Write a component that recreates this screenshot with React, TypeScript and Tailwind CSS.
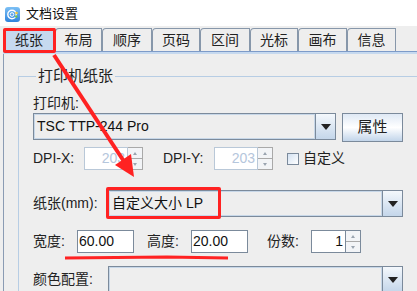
import React from 'react'

const tabs = [
  { name: '纸张', w: 'w-[52px]', active: true },
  { name: '布局', w: 'w-[47px]' },
  { name: '顺序', w: 'w-[50px]' },
  { name: '页码', w: 'w-[48px]' },
  { name: '区间', w: 'w-[50px]' },
  { name: '光标', w: 'w-[48px]' },
  { name: '画布', w: 'w-[49px]' },
  { name: '信息', w: 'w-[49px]' },
]

const DropButton = () => (
  <div className="w-[20px] h-full shrink-0 border-l border-[#7b8a9b] bg-gradient-to-b from-[#f4f8fc] to-[#c4d6ea] flex items-center justify-center">
    <div className="w-0 h-0 border-l-[5px] border-r-[5px] border-t-[6px] border-l-transparent border-r-transparent border-t-[#222]" />
  </div>
)

const Combo = ({ w, text }: { w: string; text?: string }) => (
  <div className={`${w} h-[27px] flex border border-[#7b8a9b] bg-[#eeeeee]`}>
    <div className="flex-1 border border-[#c7d7e8] flex items-center pl-[2px] text-[14px] text-[#111] whitespace-nowrap">
      {text}
    </div>
    <DropButton />
  </div>
)

const Spinner = ({
  value,
  fieldW,
  disabled,
}: {
  value: string
  fieldW: string
  disabled?: boolean
}) => (
  <div className="flex h-[23px]">
    <div
      className={`${fieldW} h-full bg-white border flex items-center justify-end pr-[2px] text-[14px] ${
        disabled ? 'border-[#b9c8d8] text-[#b5c6dc]' : 'border-[#7b8a9b] text-[#111]'
      }`}
    >
      {value}
    </div>
    <div
      className={`w-[15px] h-full flex flex-col border border-l-0 ${
        disabled ? 'border-[#a9a9a9]' : 'border-[#7b8a9b]'
      }`}
    >
      <div className="flex-1 border-b border-[#a9a9a9] bg-[#f2f4f7] flex items-center justify-center">
        <div className="w-0 h-0 border-l-[2px] border-r-[2px] border-b-[3px] border-l-transparent border-r-transparent border-b-[#9aa4b0]" />
      </div>
      <div className="flex-1 bg-[#f2f4f7] flex items-center justify-center">
        <div className="w-0 h-0 border-l-[2px] border-r-[2px] border-t-[3px] border-l-transparent border-r-transparent border-t-[#9aa4b0]" />
      </div>
    </div>
  </div>
)

const TextField = ({ value }: { value: string }) => (
  <div className="w-[57px] h-[23px] bg-white border border-[#7b8a9b] flex items-center pl-[1px] text-[14px] text-[#111]">
    {value}
  </div>
)

const AppIcon = () => (
  <svg width="15" height="15" viewBox="0 0 15 15">
    <defs>
      <linearGradient id="ic" x1="0" y1="0" x2="0" y2="1">
        <stop offset="0" stopColor="#7cc0f5" />
        <stop offset="1" stopColor="#2f83dc" />
      </linearGradient>
    </defs>
    <rect x="0" y="0" width="15" height="15" rx="3" fill="url(#ic)" />
    <circle cx="7" cy="7.5" r="4.2" fill="none" stroke="#fff" strokeWidth="1.4" />
    <circle cx="7" cy="7.5" r="1.8" fill="none" stroke="#fff" strokeWidth="1" />
    <circle cx="11.5" cy="6" r="1.3" fill="#f3c53a" />
    <circle cx="11.2" cy="9.5" r="1.2" fill="#6cc24a" />
  </svg>
)

export default function App() {
  return (
    <div className="relative w-[417px] h-[291px] overflow-hidden bg-[#eeeeee] text-[#222] font-['Liberation_Sans','Noto_Sans_CJK_SC',sans-serif]">
      {/* title bar */}
      <div className="h-[26px] bg-white flex items-center pl-[5px] gap-[6px]">
        <div className="mt-[3px]">
          <AppIcon />
        </div>
        <span className="text-[13px] text-[#111] mt-[1px]">文档设置</span>
      </div>

      {/* tabs */}
      <div className="flex pl-[3px] pt-[2px] h-[25px]">
        {tabs.map((t) => (
          <div
            key={t.name}
            className={`${t.w} h-[23px] border border-b-0 border-[#8797aa] rounded-tl-[4px] flex items-center justify-center text-[14px] text-[#222] ${
              t.active ? 'bg-[#c6d9ef]' : 'bg-[#eeeeee]'
            }`}
          >
            {t.name}
          </div>
        ))}
      </div>
      <div className="h-[1px] bg-[#7d9bc9] ml-[3px]" />
      <div className="h-[2px] bg-[#c6d9ef] ml-[3px]" />

      {/* panel */}
      <div className="ml-[3px] border-l border-[#8a9bb3] h-[240px] pt-[13px]">
        <fieldset className="ml-[14px] w-[410px] border border-[#b7cde4] pl-[14px] pb-[20px]">
          <legend className="ml-[3px] px-[2px] text-[15px] leading-[18px] text-[#222]">打印机纸张</legend>

          <div className="mt-[9px] h-[18px] text-[14px] leading-[18px]">打印机:</div>

          <div className="mt-[1px] flex items-start">
            <Combo w="w-[303px]" text="TSC TTP-244 Pro" />
            <div className="ml-[6px] w-[61px] h-[29px] border border-[#7b8a9b] bg-gradient-to-b from-[#dfe9f5] via-white to-[#c2d5ea] flex items-center justify-center text-[15px] text-[#222]">
              属性
            </div>
          </div>

          <div className="mt-[5px] h-[23px] flex items-center text-[14px]">
            <span className="w-[51px]">DPI-X:</span>
            <Spinner value="203" fieldW="w-[44px]" disabled />
            <span className="ml-[20px] w-[51px]">DPI-Y:</span>
            <Spinner value="203" fieldW="w-[44px]" disabled />
            <div className="ml-[14px] w-[12px] h-[12px] border border-[#7b8a9b] bg-gradient-to-br from-[#d4e2f2] to-white" />
            <span className="ml-[4px]">自定义</span>
          </div>

          <div className="mt-[20px] h-[27px] flex items-center text-[14px]">
            <span className="w-[75px]">纸张(mm):</span>
            <Combo w="w-[295px]" text="自定义大小 LP" />
          </div>

          <div className="mt-[13px] h-[23px] flex items-center text-[14px]">
            <span className="w-[44px]">宽度:</span>
            <TextField value="60.00" />
            <span className="ml-[13px] w-[44px]">高度:</span>
            <TextField value="20.00" />
            <span className="ml-[19px] w-[44px]">份数:</span>
            <Spinner value="1" fieldW="w-[35px]" />
          </div>

          <div className="mt-[13px] h-[27px] flex items-center text-[14px]">
            <span className="w-[75px]">颜色配置:</span>
            <Combo w="w-[295px]" />
          </div>
        </fieldset>
      </div>

      {/* red annotations */}
      <div className="absolute left-[3px] top-[28px] w-[53px] h-[25px] border-[3px] border-[#f22] rounded-[2px]" />
      <div className="absolute left-[106px] top-[187px] w-[115px] h-[32px] border-[3px] border-[#f22] rounded-[2px]" />
      <svg className="absolute inset-0 pointer-events-none" width="417" height="291">
        <line x1="54" y1="55" x2="125" y2="163" stroke="#f22" strokeWidth="4" />
        <polygon points="134,177 115,165 131,154" fill="#f22" />
        <polyline points="65,258 167,257 228,258" fill="none" stroke="#f22" strokeWidth="3" />
      </svg>
    </div>
  )
}
